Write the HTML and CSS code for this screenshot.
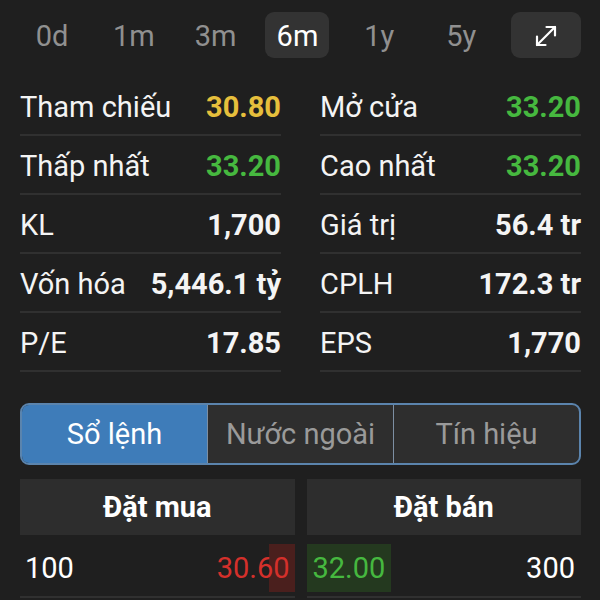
FILE: index.html
```html
<!DOCTYPE html>
<html>

<head>
    <meta charset="utf-8">
    <meta name="viewport" content="width=device-width, initial-scale=1">
    <title>Thông tin cổ phiếu</title>
    <link rel="stylesheet" href="styles.css">
</head>

<body>
    <div class="container">
        <div class="period-row">
            <div class="period">0d</div>
            <div class="period">1m</div>
            <div class="period">3m</div>
            <div class="period active">6m</div>
            <div class="period">1y</div>
            <div class="period">5y</div>
            <div class="period expand">
                <svg width="26" height="26" viewBox="0 0 26 26" fill="none" stroke="#fff" stroke-width="2.2" stroke-linecap="round" stroke-linejoin="round">
                    <path d="M4 22 L22 4" />
                    <path d="M13.5 4 H22 V12.5" />
                    <path d="M4 13.5 V22 H12.5" />
                </svg>
            </div>
        </div>

        <div class="stats">
            <div class="stat"><span class="label">Tham chiếu</span><span class="val ref">30.80</span></div>
            <div class="stat"><span class="label">Mở cửa</span><span class="val up">33.20</span></div>
            <div class="stat"><span class="label">Thấp nhất</span><span class="val up">33.20</span></div>
            <div class="stat"><span class="label">Cao nhất</span><span class="val up">33.20</span></div>
            <div class="stat"><span class="label">KL</span><span class="val">1,700</span></div>
            <div class="stat"><span class="label">Giá trị</span><span class="val">56.4 tr</span></div>
            <div class="stat"><span class="label">Vốn hóa</span><span class="val">5,446.1 tỷ</span></div>
            <div class="stat"><span class="label">CPLH</span><span class="val">172.3 tr</span></div>
            <div class="stat"><span class="label">P/E</span><span class="val">17.85</span></div>
            <div class="stat"><span class="label">EPS</span><span class="val">1,770</span></div>
        </div>

        <div class="segment">
            <div class="seg active">Sổ lệnh</div>
            <div class="seg">Nước ngoài</div>
            <div class="seg">Tín hiệu</div>
        </div>

        <div class="book">
            <div class="book-head">Đặt mua</div>
            <div class="book-head">Đặt bán</div>
            <div class="book-row">
                <span class="qty">100</span>
                <span class="price down bid">30.60</span>
            </div>
            <div class="book-row">
                <span class="price up ask">32.00</span>
                <span class="qty">300</span>
            </div>
        </div>
    </div>
</body>

</html>
```

FILE: styles.css
```css
* {
    box-sizing: border-box;
    font-family: 'Roboto', sans-serif;
}

body {
    margin: 0;
    background: #1f1f1f;
    color: #fff;
}

.container {
    padding: 12px 19px 0 20px;
}

.period-row {
    display: flex;
    justify-content: space-between;
    height: 46px;
}

.period {
    width: 64px;
    display: flex;
    align-items: center;
    justify-content: center;
    font-size: 29px;
    color: #909090;
    border-radius: 9px;
    padding-top: 1px;
}

.period.active {
    background: #333333;
    color: #fff;
}

.period.expand {
    width: 70px;
    background: #333333;
}

.stats {
    display: grid;
    grid-template-columns: 1fr 1fr;
    column-gap: 39px;
    margin-top: 19px;
}

.stat {
    display: flex;
    justify-content: space-between;
    align-items: center;
    height: 59px;
    border-bottom: solid 2px #303030;
    font-size: 29px;
    padding-top: 3px;
}

.label {
    color: #f4f4f4;
}

.val {
    font-weight: bold;
    color: #f4f4f4;
}

.val.ref {
    color: #e6bf3c;
}

.up {
    color: #46b83f !important;
}

.down {
    color: #d4302b;
}

.segment {
    display: flex;
    margin-top: 31px;
    height: 62px;
    border: solid 2px #5b84ad;
    border-radius: 9px;
    overflow: hidden;
    background: #2e2e2e;
}

.seg {
    flex: 1;
    display: flex;
    align-items: center;
    justify-content: center;
    font-size: 29px;
    color: #9a9a9a;
    border-left: solid 1px #7d8fa3;
}

.seg:first-child {
    border-left: none;
}

.seg.active {
    background: #3e7cb9;
    color: #fff;
}

.book {
    display: grid;
    grid-template-columns: 1fr 1fr;
    column-gap: 12px;
    margin-top: 14px;
}

.book-head {
    height: 56px;
    background: #2d2d2d;
    display: flex;
    align-items: center;
    justify-content: center;
    font-size: 29px;
    font-weight: bold;
}

.book-row {
    display: flex;
    justify-content: space-between;
    align-items: center;
    height: 63px;
    padding-top: 5px;
    border-bottom: solid 2px #303030;
    font-size: 29px;
}

.qty {
    padding: 0 6px 0 5px;
}

.price {
    height: 48px;
    display: flex;
    align-items: center;
}

.price.bid {
    padding-right: 5px;
    background: linear-gradient(to right, transparent 0, transparent calc(100% - 26px), #4a1f1d calc(100% - 26px));
}

.price.ask {
    padding: 0 6px 0 6px;
    background: #24391f;
}
```
